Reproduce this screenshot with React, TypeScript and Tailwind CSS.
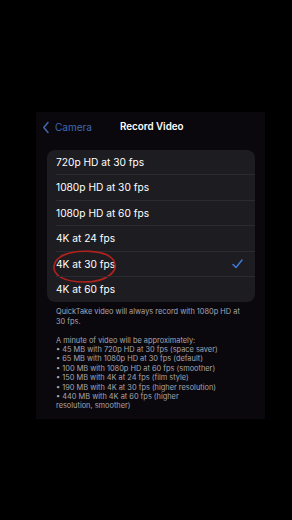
const options = [
  "720p HD at 30 fps",
  "1080p HD at 30 fps",
  "1080p HD at 60 fps",
  "4K at 24 fps",
  "4K at 30 fps",
  "4K at 60 fps",
];

const sizes = [
  "45 MB with 720p HD at 30 fps (space saver)",
  "65 MB with 1080p HD at 30 fps (default)",
  "100 MB with 1080p HD at 60 fps (smoother)",
  "150 MB with 4K at 24 fps (film style)",
  "190 MB with 4K at 30 fps (higher resolution)",
  "440 MB with 4K at 60 fps (higher",
];

const App = () => {
  return (
    <div
      className="w-[292px] h-[520px] bg-black flex overflow-hidden"
      style={{ fontFamily: "Inter, 'Liberation Sans', sans-serif" }}
    >
      <div className="mt-[112px] ml-[36px] w-[229px] h-[307px] bg-[#0a080d] flex flex-col">
        {/* nav bar */}
        <div className="relative h-[28px] mt-[1px] flex items-center">
          <div className="flex items-center pl-[6px] text-[#4068b0] text-[10px]">
            <svg width="9" height="13" viewBox="0 0 9 13" className="mr-[4px]">
              <path d="M6 1.5 L1.8 6.5 L6 11.5" fill="none" stroke="#4068b0" strokeWidth="1.5" strokeLinecap="round" strokeLinejoin="round" />
            </svg>
            Camera
          </div>
          <div className="absolute left-[84px] text-white text-[9.8px] font-semibold">Record Video</div>
        </div>

        {/* options card */}
        <div className="mt-[9px] ml-[11px] w-[208px] rounded-[8px] bg-[#1d1c21] flex flex-col">
          {options.map((o, i) => (
            <div key={o} className="relative pl-[9px] h-[25.4px] flex items-center">
              <span className="text-white text-[10.2px]">{o}</span>
              {i === 4 && (
                <>
                  <svg width="66" height="36" viewBox="0 0 66 36" className="absolute left-[4px] top-[-3px] pointer-events-none">
                    <path
                      d="M10 7 C 24 0, 56 0, 63 12 C 68 22, 56 33, 34 33 C 12 33, 2 26, 3 17 C 4 10, 12 5, 24 3"
                      fill="none"
                      stroke="#b0221d"
                      strokeWidth="1.6"
                    />
                  </svg>
                  <svg width="11" height="10" viewBox="0 0 11 10" className="absolute right-[12px]">
                    <path d="M1 5.5 L4 8.5 L10 1" fill="none" stroke="#3f78d8" strokeWidth="1.5" strokeLinecap="round" strokeLinejoin="round" />
                  </svg>
                </>
              )}
              {i < options.length - 1 && (
                <div className="absolute left-[9px] right-0 bottom-0 h-px bg-[#2c2b31]" />
              )}
            </div>
          ))}
        </div>

        {/* footer notes */}
        <div className="mt-[5px] ml-[20px] mr-[10px] text-[#a6a5ad] text-[7.4px] leading-[9.4px]">
          <div>QuickTake video will always record with 1080p HD at</div>
          <div>30 fps.</div>
          <div className="h-[9.4px]" />
          <div>A minute of video will be approximately:</div>
          {sizes.map((s) => (
            <div key={s}>• {s}</div>
          ))}
          <div>resolution, smoother)</div>
        </div>
      </div>
    </div>
  );
};

export default App;
